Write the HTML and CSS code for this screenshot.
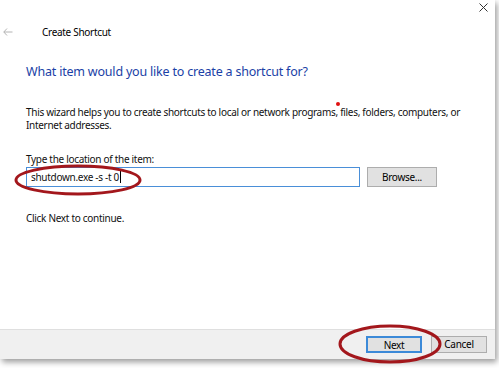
FILE: index.html
```html
<!DOCTYPE html>
<html lang="en">
<head>
  <meta charset="UTF-8" />
  <title>Create Shortcut</title>
  <link rel="stylesheet" href="styles.css">
</head>
<body>
  <div class="window">
    <div class="caption">
      <svg class="close" width="9" height="9" viewBox="0 0 9 9">
        <path d="M0.5 0.5 L8.5 8.5 M8.5 0.5 L0.5 8.5" stroke="#333" stroke-width="1" fill="none"/>
      </svg>
    </div>
    <div class="nav">
      <svg class="back" width="10" height="8" viewBox="0 0 10 8">
        <path d="M4 0.5 L0.8 4 L4 7.5 M0.8 4 H9.5" stroke="#b4b4b4" stroke-width="1" fill="none"/>
      </svg>
      <span class="title">Create Shortcut</span>
    </div>

    <div class="content">
      <h1>What item would you like to create a shortcut for?</h1>
      <p class="intro">This wizard helps you to create shortcuts to local or network programs, files, folders, computers, or Internet addresses.</p>

      <label class="field-label">Type the location of the item:</label>
      <div class="field-row">
        <div class="text-input">shutdown.exe -s -t 0<span class="caret"></span></div>
        <button class="btn">Browse...</button>
      </div>

      <p class="hint">Click Next to continue.</p>
    </div>

    <div class="footer">
      <button class="btn btn-default">Next</button>
      <button class="btn">Cancel</button>
    </div>

    <!-- annotations drawn on top of the dialog -->
    <span class="dot"></span>
    <svg class="mark mark-input" width="130" height="34" viewBox="0 0 130 34">
      <ellipse cx="65" cy="17" rx="62" ry="14" stroke="#a3171c" stroke-width="3" fill="none"/>
    </svg>
    <svg class="mark mark-next" width="106" height="42" viewBox="0 0 106 42">
      <ellipse cx="53" cy="21" rx="50" ry="18" stroke="#a3171c" stroke-width="3" fill="none"/>
    </svg>
  </div>
</body>
</html>
```

FILE: styles.css
```css
* { box-sizing: border-box; }
html, body {
  margin: 0; height: 100%;
  background: #fff;
  font-family: 'Noto Sans', 'Open Sans', sans-serif;
  font-size: 10px; color: #111;
  letter-spacing: -0.3px;
}
.window {
  position: relative;
  width: 495px; height: 359px;
  background: #fff;
  display: flex; flex-direction: column;
  box-shadow: 2px 3px 6px rgba(0,0,0,0.4);
}
.caption {
  display: flex; justify-content: flex-end;
  height: 14px; padding: 3px 7px 0 0;
}
.nav {
  display: flex; align-items: center;
  height: 14px; margin-top: 11px;
}
.back { margin-left: 3px; }
.title { margin-left: 29px; font-size: 10px; color: #000; }

.content { padding-left: 26px; }
h1 {
  margin: 25px 0 0; font-size: 12.5px; line-height: 16px;
  letter-spacing: -0.2px;
  font-weight: normal; color: #1b3fa6;
}
.intro {
  margin: 26px 0 0; width: 455px;
  line-height: 12.5px;
}
.field-label { display: block; margin-top: 22px; line-height: 12.5px; }
.field-row {
  display: flex; gap: 7px; margin-top: 1.5px;
}
.text-input {
  width: 334px; height: 20px;
  border: 1px solid #4a8fd8;
  padding: 0 0 0 4px; line-height: 18px;
  display: flex; align-items: center;
}
.caret {
  display: inline-block; width: 1px; height: 12px;
  background: #000; margin-left: 1px;
}
.btn {
  font-family: inherit; font-size: 10px; color: #000;
  letter-spacing: inherit;
  width: 70px; height: 20px; padding: 0;
  background: #e1e1e1; border: 1px solid #adadad;
}
.hint { margin: 25px 0 0; line-height: 12.5px; }

.footer {
  margin-top: auto;
  height: 30px;
  background: #f0f0f0; border-top: 1px solid #dfdfdf;
  display: flex; justify-content: flex-end; align-items: center;
  gap: 9px; padding: 0 8px 0 0;
}
.footer .btn { width: 56px; height: 17px; line-height: 15px; }
.btn-default { border: 2px solid #3c8ad8; }

.dot {
  position: absolute; left: 336px; top: 102px;
  width: 4px; height: 4px; border-radius: 50%;
  background: #e01010;
}
.mark { position: absolute; }
.mark-input { left: 13px; top: 163px; }
.mark-next { left: 337px; top: 323px; }
```
